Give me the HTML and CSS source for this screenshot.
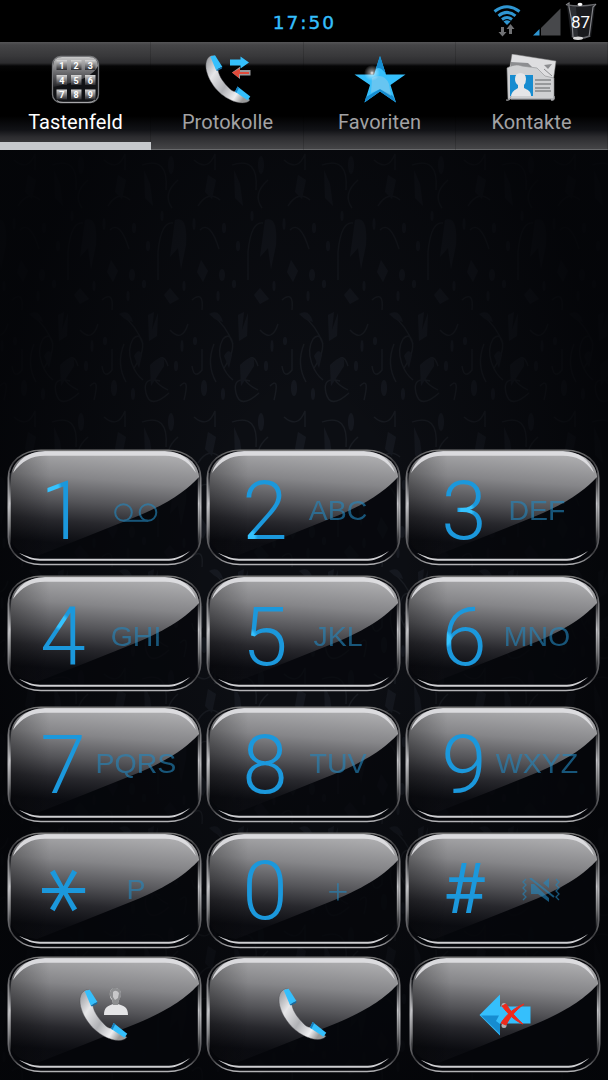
FILE: index.html
```html
<!DOCTYPE html>
<html lang="de">
  <head>
    <meta charset="UTF-8" />
    <meta name="viewport" content="width=device-width, initial-scale=1.0" />
    <title>Telefon</title>
    <link rel="stylesheet" href="styles.css">
  </head>
  <body>
    <!-- Shared shapes -->
    <svg class="defs" width="0" height="0">
      <defs>
        <linearGradient id="glass" x1="0.55" y1="0" x2="0.42" y2="0.9">
          <stop offset="0" stop-color="#b0b0b2" stop-opacity="0.98" />
          <stop offset="0.3" stop-color="#8f8f92" stop-opacity="0.93" />
          <stop offset="0.55" stop-color="#606064" stop-opacity="0.87" />
          <stop offset="0.76" stop-color="#2e2e33" stop-opacity="0.85" />
          <stop offset="1" stop-color="#0d0e13" stop-opacity="0.7" />
        </linearGradient>
        <linearGradient id="rim" x1="0" y1="0" x2="0" y2="1">
          <stop offset="0" stop-color="#777" />
          <stop offset="0.1" stop-color="#3c3c3f" />
          <stop offset="0.25" stop-color="#77777a" />
          <stop offset="0.5" stop-color="#b5b5b8" />
          <stop offset="0.75" stop-color="#66666a" />
          <stop offset="0.9" stop-color="#3a3a3d" />
          <stop offset="1" stop-color="#b2b2b5" />
        </linearGradient>
        <linearGradient id="sideLine" x1="0" y1="0" x2="0" y2="1">
          <stop offset="0" stop-color="#ddd" stop-opacity="0.1" />
          <stop offset="0.4" stop-color="#e5e5e8" stop-opacity="0.85" />
          <stop offset="0.7" stop-color="#ccc" stop-opacity="0.6" />
          <stop offset="1" stop-color="#ccc" stop-opacity="0" />
        </linearGradient>
        <linearGradient id="sideShade" x1="0" y1="0" x2="1" y2="0">
          <stop offset="0" stop-color="#000" stop-opacity="0.25" />
          <stop offset="0.4" stop-color="#000" stop-opacity="0" />
        </linearGradient>
        <linearGradient id="handset" x1="0" y1="0" x2="1" y2="0.7">
          <stop offset="0" stop-color="#8d8f94" />
          <stop offset="0.3" stop-color="#e6e6e8" />
          <stop offset="0.6" stop-color="#b0b1b5" />
          <stop offset="0.85" stop-color="#eeeef0" />
          <stop offset="1" stop-color="#999" />
        </linearGradient>
        <linearGradient id="padTop" x1="0" y1="0" x2="0" y2="1">
          <stop offset="0" stop-color="#dadada" />
          <stop offset="0.5" stop-color="#77777a" />
          <stop offset="1" stop-color="#26262a" />
        </linearGradient>
        <linearGradient id="keycap" x1="0" y1="0" x2="0" y2="1">
          <stop offset="0" stop-color="#d8d8d8" />
          <stop offset="1" stop-color="#2c2c30" />
        </linearGradient>
      </defs>

      <symbol id="key-face" viewBox="0 0 195 117" preserveAspectRatio="none">
        <path d="M34 1.5H161C179 2 193 13 193 29V88C193 104 180 115 161 115H34C15 115 2 104 2 88V29C2 13 16 2 34 1.5Z" fill="#06070b" fill-opacity="0.72" />
        <path d="M34 3H161C179 4 191 14 192 28C180 41 163 54 126 69L76 89L30 107C13 105 4 99 4 87V29C4 14 16 4 34 3Z" fill="url(#glass)" />
        <path d="M34 3H100V110H30C13 106 4 99 4 87V29C4 14 16 4 34 3Z" fill="url(#sideShade)" />
        <path d="M34 1.2H161C180 1.5 193.7 13 193.7 29V88C193.7 104 180 115.5 161 115.5H34C15 115.5 1.3 104 1.3 88V29C1.3 13 15 1.5 34 1.2Z" fill="none" stroke="url(#rim)" stroke-width="1.6" />
        <path d="M2.8 24V100M191.8 24V100" stroke="url(#sideLine)" stroke-width="2" />
        <path d="M6 24C10 11 21 2.5 38 2H158C174 2.5 185 11 189 24C180 11 171 7 158 6.8H38C24 7 15 12 6 24Z" fill="#e0e0e3" opacity="0.92" />
        <path d="M12 104C20 109 25 111.5 33 111.7H162C170 111.5 176 108 183 102C176 106 170 109.6 162 109.7H33C25 109.6 20 107 12 104Z" fill="#cfcfd2" />
      </symbol>

      <symbol id="phone" viewBox="0 0 46 50">
        <path d="M7 1.5C1 3 0 10 1.5 17C5 31 17 44 31 48C37 49.7 43 49 45 46L33 37C29 38.500 26 36.500 23 33C17 27 13 20 13 15L10 2Z" fill="url(#handset)" stroke="#46474b" stroke-width="0.4" />
        <path d="M5.300 2.500 10 1.200 17.300 12.700 11 16Z" fill="#35bffc" />
        <path d="M11 16 17.300 12.700 17 14.500 12 17Z" fill="#126da6" />
        <path d="M32.500 32.500 45.300 42.500 42.700 46.300 30 37.800Z" fill="#35bffc" />
        <path d="M32.500 32.500 34 33.700 31.500 38.800 30 37.800Z" fill="#167ebd" />
      </symbol>
    </svg>

    <div class="screen">
      <!-- Status bar -->
      <header class="status-bar">
        <div class="clock">17:50</div>
        <div class="status-icons">
          <svg class="wifi" viewBox="0 0 28 32">
            <g fill="none" stroke="#2f96d2" stroke-width="3">
              <path d="M1.500 6.500Q14 -3 26.500 6.500" />
              <path d="M5.500 10.800Q14 4 22.500 10.800" />
              <path d="M9 14.500Q14 10.500 19 14.500" />
            </g>
            <path d="M10.500 16.500Q14 13.800 17.500 16.500L14 20Z" fill="#2f96d2" />
            <path d="M8 22H11V27H13.500L9.500 31.500 5.500 27H8ZM16 29H19V24H21.500L17.500 19 13.500 24H16Z" fill="#707174" />
          </svg>
          <svg class="signal" viewBox="0 0 28 28">
            <path d="M8 20 27.500 0.500V27.500H8Z" fill="#47484b" />
            <path d="M0 27.500 6.500 21V27.500Z" fill="#2f96d2" />
          </svg>
          <svg class="battery" viewBox="0 0 32 39">
            <path d="M2 4H30L26 35H6Z" fill="#1a1b1e" />
            <path d="M4 5H11L13 34H8Z" fill="#2d2f33" />
            <path d="M1 3 4 1V5L7 20 8 35M31 2 28 5 26 20 24 35" fill="none" stroke="#85868a" stroke-width="1.200" />
            <path d="M2 3Q16 5 30 2.500M7 34.500Q15 38 25 34" fill="none" stroke="#66676b" stroke-width="1.500" />
            <ellipse cx="15" cy="2.300" rx="2.500" ry="1.600" fill="#fff" />
            <ellipse cx="13" cy="36.300" rx="5" ry="1.700" fill="#dadada" />
            <text x="15.500" y="25.500" text-anchor="middle">87</text>
          </svg>
        </div>
      </header>

      <!-- Tabs -->
      <nav class="tabs">
        <div class="tab active">
          <svg class="tab-icon" viewBox="0 0 52 50">
            <rect x="2.500" y="2.500" width="46" height="46" rx="8" fill="#111215" stroke="#77787b" stroke-width="1.300" />
            <path d="M3 12Q3 3 12 3H39Q48 3 48 12C43 22 29 28 3 33Z" fill="url(#padTop)" opacity="0.9" />
            <g fill="url(#keycap)">
              <rect x="6.500" y="6" width="10.500" height="10" />
              <rect x="21" y="6" width="10.500" height="10" />
              <rect x="35" y="6" width="10.500" height="10" />
              <rect x="6.500" y="21" width="10.500" height="10" />
              <rect x="21" y="21" width="10.500" height="10" />
              <rect x="35" y="21" width="10.500" height="10" />
              <rect x="6.500" y="35.500" width="10.500" height="10" />
              <rect x="21" y="35.500" width="10.500" height="10" />
              <rect x="35" y="35.500" width="10.500" height="10" />
            </g>
            <g class="pad-digits">
              <text x="12" y="14.500">1</text>
              <text x="26.200" y="14.500">2</text>
              <text x="40.500" y="14.500">3</text>
              <text x="12" y="29.500">4</text>
              <text x="26.200" y="29.500">5</text>
              <text x="40.500" y="29.500">6</text>
              <text x="12" y="44">7</text>
              <text x="26.200" y="44">8</text>
              <text x="40.500" y="44">9</text>
            </g>
            <path d="M7 46.500Q9 48.500 13 48.500H38Q42 48.500 45 46" fill="none" stroke="#b5b5b7" stroke-width="0.800" />
          </svg>
          <span>Tastenfeld</span>
        </div>
        <div class="tab">
          <svg class="tab-icon" viewBox="0 0 52 50">
            <use href="#phone" x="3" y="0" width="46" height="50" />
            <path d="M28 5.500H38.500V2.500L47 8.500 38.500 14.500V11.500H28Z" fill="#35bffc" />
            <path d="M48.500 16V21.500H38V25L30 18.500 38 12.800V16Z" fill="#99999c" />
            <path d="M30 18.500 38 14.500V18H47V20H37V24Z" fill="#e04a3a" />
          </svg>
          <span>Protokolle</span>
        </div>
        <div class="tab">
          <svg class="tab-icon" viewBox="0 0 52 50">
            <defs>
              <radialGradient id="glint">
                <stop offset="0" stop-color="#fff" />
                <stop offset="0.25" stop-color="#fff" stop-opacity="0.5" />
                <stop offset="1" stop-color="#fff" stop-opacity="0" />
              </radialGradient>
            </defs>
            <path d="M26 2 32 20.500 51.500 20.500 36.500 31 42 48.500 26 37.500 10.500 48.500 16 31 0.500 20.500H20Z" fill="#35bffc" />
            <path d="M26 2 31.500 19Q25 11 21.500 15.500ZM42 48.500 26 37.500 10.500 48.500 12 43 26 35 39 42Z" fill="#168cd0" />
            <path d="M18 24Q30 18 35 30L37 42 26 35 17 39Z" fill="#8fcbe8" opacity="0.55" />
            <circle cx="18" cy="19" r="8" fill="url(#glint)" />
          </svg>
          <span>Favoriten</span>
        </div>
        <div class="tab">
          <svg class="tab-icon" viewBox="0 0 52 50">
            <path d="M6 0 50 7 47 29 3 18Z" fill="#dedee0" stroke="#777" stroke-width="0.500" />
            <path d="M5 8 22 9 26 13 5 14ZM38 11 46 10 42 15Z" fill="#8d8e91" />
            <path d="M38 15 46 22" stroke="#8d8e91" />
            <path d="M1 14Q9 9 16 12L31 14 39 22 48 24V45H2Z" fill="#cfd0d2" stroke="#8d8e91" stroke-width="0.600" />
            <rect x="4" y="21" width="23" height="21" fill="#168cd0" />
            <path d="M5 42C6 37 9 36 12 34V31Q9 29 9 25Q9 19 14.500 19T20 25Q20 29 18 31V34C22 36 25 37 25 42Z" fill="#e6e6e8" />
            <path d="M29 26H45M29 30H45M29 34H44M29 37H45" stroke="#858689" stroke-width="1.300" />
            <path d="M0 46Q4 47 5 42M5 45 47 45M48 42Q49 47 45 46" fill="none" stroke="#aaaaad" stroke-width="1.200" />
          </svg>
          <span>Kontakte</span>
        </div>
      </nav>

      <!-- Dial pad -->
      <main class="dialer">
        <div class="key-row row-1">
          <button class="key key-1">
            <svg class="face"><use href="#key-face" /></svg>
            <span class="digit">1</span>
            <span class="letters">
              <svg class="voicemail" viewBox="0 0 44 20" fill="none" stroke="currentColor" stroke-width="2">
                <circle cx="9.500" cy="9.500" r="8.300" />
                <circle cx="34" cy="9.500" r="8.300" />
                <path d="M9.500 17.800H34" />
              </svg>
            </span>
          </button>
          <button class="key key-2">
            <svg class="face"><use href="#key-face" /></svg>
            <span class="digit">2</span>
            <span class="letters">ABC</span>
          </button>
          <button class="key key-3">
            <svg class="face"><use href="#key-face" /></svg>
            <span class="digit">3</span>
            <span class="letters">DEF</span>
          </button>
        </div>

        <div class="key-row row-2">
          <button class="key key-4">
            <svg class="face"><use href="#key-face" /></svg>
            <span class="digit">4</span>
            <span class="letters">GHI</span>
          </button>
          <button class="key key-5">
            <svg class="face"><use href="#key-face" /></svg>
            <span class="digit">5</span>
            <span class="letters">JKL</span>
          </button>
          <button class="key key-6">
            <svg class="face"><use href="#key-face" /></svg>
            <span class="digit">6</span>
            <span class="letters">MNO</span>
          </button>
        </div>

        <div class="key-row row-3">
          <button class="key key-7">
            <svg class="face"><use href="#key-face" /></svg>
            <span class="digit">7</span>
            <span class="letters">PQRS</span>
          </button>
          <button class="key key-8">
            <svg class="face"><use href="#key-face" /></svg>
            <span class="digit">8</span>
            <span class="letters">TUV</span>
          </button>
          <button class="key key-9">
            <svg class="face"><use href="#key-face" /></svg>
            <span class="digit">9</span>
            <span class="letters">WXYZ</span>
          </button>
        </div>

        <div class="key-row row-4">
          <button class="key key-star">
            <svg class="face"><use href="#key-face" /></svg>
            <span class="digit star">*</span>
            <span class="letters">P</span>
          </button>
          <button class="key key-0">
            <svg class="face"><use href="#key-face" /></svg>
            <span class="digit">0</span>
            <span class="letters plus">+</span>
          </button>
          <button class="key key-hash">
            <svg class="face"><use href="#key-face" /></svg>
            <span class="digit hash">#</span>
            <span class="letters">
              <svg class="mute" viewBox="0 0 38 25">
                <path d="M4 1 1 4 4 7 1 10 4 13 1 16 4 19 1 22M34 1 37 4 34 7 37 10 34 13 37 16 34 19 37 22" fill="none" stroke="currentColor" stroke-width="1.300" />
                <path d="M9 6H12L27 20V24L16 16H9ZM21 5 27 0V10Z" fill="currentColor" />
                <path d="M8 0 32 19" stroke="currentColor" stroke-width="2" />
              </svg>
            </span>
          </button>
        </div>

        <!-- Call actions -->
        <div class="key-row row-5">
          <button class="key action">
            <svg class="face"><use href="#key-face" /></svg>
            <svg class="action-icon" viewBox="0 0 49 55">
              <use href="#phone" y="1" width="49" height="54" />
              <g transform="translate(24 0)">
                <path d="M1 28C1 20 5 19 10 17L9 13Q6 10 7 5Q8 1 12 1T18 5Q18 10 16 13L15 17C21 19 25 20 25 28Z" fill="#e4e4e6" />
                <path d="M10 18 9 12Q6 9 7 5Q9 0 13 1Q18 2 18 6Q18 11 16 13L15 18Z" fill="#77787b" opacity="0.8" />
                <path d="M10 5Q13 2 16 6L15 11 12 13 10 10Z" fill="#c7c7c9" />
              </g>
            </svg>
          </button>
          <button class="key action">
            <svg class="face"><use href="#key-face" /></svg>
            <svg class="action-icon" viewBox="0 0 49 55">
              <use href="#phone" width="49" height="54" />
            </svg>
          </button>
          <button class="key action delete">
            <svg class="face"><use href="#key-face" /></svg>
            <svg class="delete-icon" viewBox="0 0 52 42">
              <path d="M0.500 21 21 0.500V12.500H51.500V29.500H21V41.500Z" fill="#35bffc" />
              <path d="M2 21.500H20L17 27 21 30V40Z" fill="#168cd0" />
              <circle cx="25" cy="11.500" r="2.500" fill="#aeb0b3" />
              <circle cx="25" cy="31.500" r="2.500" fill="#aeb0b3" />
              <path d="M23 12 27 10C32 18 37 24 44 30 36 27 29 20 23 12ZM22 29C28 20 35 14 45 10 37 16 31 23 27 31Z" fill="#ee2a1c" stroke="#ee2a1c" />
            </svg>
          </button>
        </div>
      </main>
    </div>
  </body>
</html>
```
FILE: styles.css
```css
* {
  box-sizing: border-box;
}

body {
  margin: 0;
  background: #000;
  font-family: Roboto, "Liberation Sans", sans-serif;
}

.defs {
  display: block;
}

.screen {
  width: 608px;
  height: 1080px;
  overflow: hidden;
}

/* Status bar */
.status-bar {
  display: grid;
  grid-template-columns: 1fr auto 1fr;
  align-items: start;
  height: 42px;
  background: #000;
}

.clock {
  grid-column: 2;
  margin: 11px 0 0 1px;
  font-family: "DejaVu Sans", sans-serif;
  font-size: 18.5px;
  line-height: 24px;
  letter-spacing: 2px;
  color: #35bffc;
  -webkit-text-stroke: 0.4px #35bffc;
}

.status-icons {
  display: flex;
  justify-content: flex-end;
  padding-right: 11px;
}

.wifi {
  width: 28px;
  height: 32px;
  margin: 5px 12px 0 0;
}

.signal {
  width: 28px;
  height: 28px;
  margin: 8px 4px 0 0;
}

.battery {
  width: 32px;
  height: 39px;
  margin-top: 2px;
}

.battery text {
  font-size: 17px;
  fill: #fff;
}

/* Tabs */
.tabs {
  display: grid;
  grid-template-columns: repeat(4, 1fr);
  height: 108px;
  border-bottom: 1px solid #68696b;
  background: linear-gradient(
    #555557 0,
    #454547 3px,
    #38383a 14px,
    #2b2b2e 21px,
    #050506 24px,
    #000 30px,
    #000 74px,
    #111216 88px,
    #2c2c2f 95px,
    #454547 107px
  );
}

.tab {
  display: flex;
  flex-direction: column;
  align-items: center;
  height: 108px;
  padding: 12px 1px 0 0;
  box-shadow: inset -1px 0 rgba(0, 0, 0, 0.15);
  font-size: 20px;
  line-height: 24px;
  letter-spacing: 0.1px;
  color: #a2a2a4;
}

.tab-icon {
  width: 52px;
  height: 50px;
}

.pad-digits {
  font-size: 9px;
  font-weight: 700;
  text-anchor: middle;
  fill: #fff;
}

.tab span {
  margin-top: 6px;
}

.tab.active {
  width: 151px;
  padding-right: 0;
  color: #fff;
  border-bottom: 8px solid #c6c9cc;
}

/* Wallpaper and dial pad */
.dialer {
  height: 930px;
  padding: 299px 0 0 7px;
  background:
    radial-gradient(ellipse 320px 560px at 50% 45%, rgba(3, 4, 7, 0) 30%, rgba(3, 4, 7, 0.85) 100%),
    url("data:image/svg+xml,%3Csvg xmlns='http://www.w3.org/2000/svg' width='90' height='257'%3E%3Cg fill='none' stroke='%23181b21' stroke-width='1.300'%3E%3Cpath d='M34 218C50 194 40 180 33 189C24 204 35 224 43 230M22 165Q36 175 43 194M60 231Q42 226 46 243T69 243M68 216Q63 200 55 215T68 240M70 180Q82 193 88 174M4 10Q18 22 25 4V20M73 73Q61 71 58 102V130M42 15Q69 6 66 40M10 80Q20 70 29 99M24 194Q16 214 26 232M2 150Q14 140 12 160M78 30Q62 44 72 58M30 50Q18 40 8 56M80 236Q90 226 84 250M12 199V220Q4 230 2 216'/%3E%3C/g%3E%3Cg fill='%2315181f'%3E%3Cpath d='M48 165L54 162 52 180 58 163 57 186 49 191ZM19 164Q29 158 33 172L25 169ZM50 215Q66 200 64 216L51 236ZM34 206Q39 197 42 205L39 218ZM75 70Q88 65 86 95L81 119 78 98 70 107ZM44 20L50 34 53 56 45 48ZM64 145L70 138 79 149 70 154ZM18 25L26 30 22 49 15 42ZM11 110L18 121 13 132 7 122Z'/%3E%3Cellipse cx='14' cy='238' rx='3' ry='8'/%3E%3Cellipse cx='32' cy='125' rx='3' ry='6'/%3E%3Cellipse cx='71' cy='15' rx='3' ry='9'/%3E%3Cellipse cx='5' cy='191' rx='2' ry='4'/%3E%3Cellipse cx='76' cy='216' rx='2' ry='5'/%3E%3Cellipse cx='48' cy='96' rx='2' ry='5'/%3E%3Cellipse cx='28' cy='146' rx='1.500' ry='5'/%3E%3Cellipse cx='44' cy='134' rx='2' ry='4'/%3E%3Cellipse cx='82' cy='196' rx='1.500' ry='6'/%3E%3Cellipse cx='34' cy='78' rx='2' ry='5'/%3E%3Cellipse cx='4' cy='74' rx='1.500' ry='6'/%3E%3Cellipse cx='33' cy='244' rx='2' ry='6'/%3E%3Cellipse cx='62' cy='66' rx='1.500' ry='5'/%3E%3Cellipse cx='84' cy='136' rx='1.500' ry='5'/%3E%3C/g%3E%3C/svg%3E") 10px 0,
    #0c0e13;
}

.key-row {
  display: flex;
  gap: 4px;
}

.row-1 {
  margin-bottom: 9px;
}

.row-2 {
  margin-bottom: 14px;
}

.row-3 {
  margin-bottom: 9px;
}

.row-4 {
  margin-bottom: 7px;
}

.key {
  display: grid;
  grid-template-columns: 29px 60px 86px 20px;
  width: 195px;
  height: 117px;
  padding: 0;
  border: none;
  background: transparent;
  font-family: inherit;
  cursor: pointer;
}

.face {
  grid-area: 1 / 1 / 2 / -1;
  width: 100%;
  height: 117px;
}

.digit {
  --glint: 10% 90%;
  grid-area: 1 / 2;
  justify-self: center;
  height: 117px;
  font-size: 82px;
  font-weight: 300;
  line-height: 124px;
  color: transparent;
  background: radial-gradient(circle 9px at var(--glint), #35c3ff 60%, #1b98dc 100%) #1b98dc;
  -webkit-background-clip: text;
  background-clip: text;
}

.key-1 .digit {
  --glint: 28% 33%;
}

.key-2 .digit {
  --glint: 15% 75%;
}

.key-3 .digit {
  --glint: 55% 52%;
}

.key-4 .digit {
  --glint: 45% 40%;
}

.key-5 .digit {
  --glint: 15% 53%;
}

.key-6 .digit {
  --glint: 8% 55%;
}

.letters {
  grid-area: 1 / 3;
  justify-self: center;
  display: flex;
  justify-content: center;
  height: 117px;
  font-family: "Liberation Sans", Inter, sans-serif;
  font-size: 28.5px;
  line-height: 123px;
  color: #2386bd;
  opacity: 0.62;
}

.key:first-child .digit,
.key:first-child .letters {
  margin-right: 6px;
}

.row-3 .digit,
.row-4 .digit {
  line-height: 118px;
}

.row-3 .letters,
.row-4 .letters {
  line-height: 115px;
}

.key .digit.star {
  height: 117px;
  margin-right: 2px;
  font-family: "DejaVu Sans", sans-serif;
  font-weight: 400;
  font-size: 94px;
  line-height: 154px;
  transform: rotate(90deg);
}

.row-4 .digit.hash {
  font-size: 70px;
  font-weight: 400;
  line-height: 115px;
}

.row-4 .letters.plus {
  font-family: Inter, "Liberation Sans", sans-serif;
  font-size: 40px;
  font-weight: 200;
  line-height: 113px;
}

.voicemail {
  width: 44px;
  height: 20px;
  margin-top: 54px;
}

.mute {
  width: 38px;
  height: 25px;
  margin: 46px 0 0 8px;
}

/* Call actions */
.row-5 .key {
  grid-template-columns: 1fr;
  justify-items: center;
}

.row-5 .delete {
  margin-left: 4px;
  width: 192px;
}

.row-5 .face {
  grid-area: 1 / 1;
}

.action-icon,
.delete-icon {
  grid-area: 1 / 1;
}

.action-icon {
  width: 49px;
  height: 55px;
  margin: 31px 3px 0 0;
}

.delete-icon {
  width: 52px;
  height: 42px;
  margin-top: 38px;
}
```
